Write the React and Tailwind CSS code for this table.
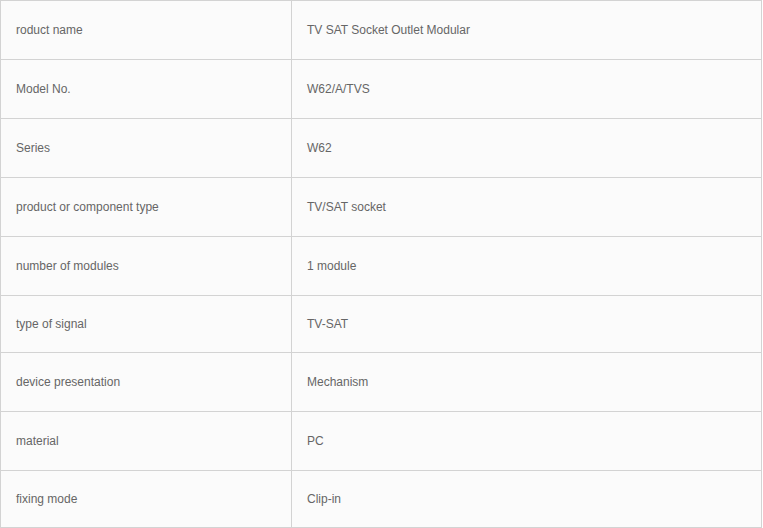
import React from "react";

const rows = [
  ["roduct name", "TV SAT Socket Outlet Modular", "h-[58px]"],
  ["Model No.", "W62/A/TVS", "h-[58px]"],
  ["Series", "W62", "h-[58px]"],
  ["product or component type", "TV/SAT socket", "h-[58px]"],
  ["number of modules", "1 module", "h-[58px]"],
  ["type of signal", "TV-SAT", "h-[56px]"],
  ["device presentation", "Mechanism", "h-[58px]"],
  ["material", "PC", "h-[58px]"],
  ["fixing mode", "Clip-in", "h-[56px]"],
];

export default function App() {
  return (
    <div className="w-[763px] h-[528px] bg-white">
      <div
        className="w-[762px] border border-[#d3d3d3] bg-[#fbfbfb] text-[12px] text-[#666666]"
        style={{ fontFamily: '"Liberation Sans", Arial, sans-serif' }}
      >
        {rows.map(([k, v, h], i) => (
          <div
            key={i}
            className={`flex ${i < rows.length - 1 ? "border-b border-[#d3d3d3]" : ""}`}
          >
            <div className={`w-[291px] ${h} border-r border-[#d3d3d3] flex items-center pl-[15px]`}>
              {k}
            </div>
            <div className={`flex-1 ${h} flex items-center pl-[15px]`}>{v}</div>
          </div>
        ))}
      </div>
    </div>
  );
}
